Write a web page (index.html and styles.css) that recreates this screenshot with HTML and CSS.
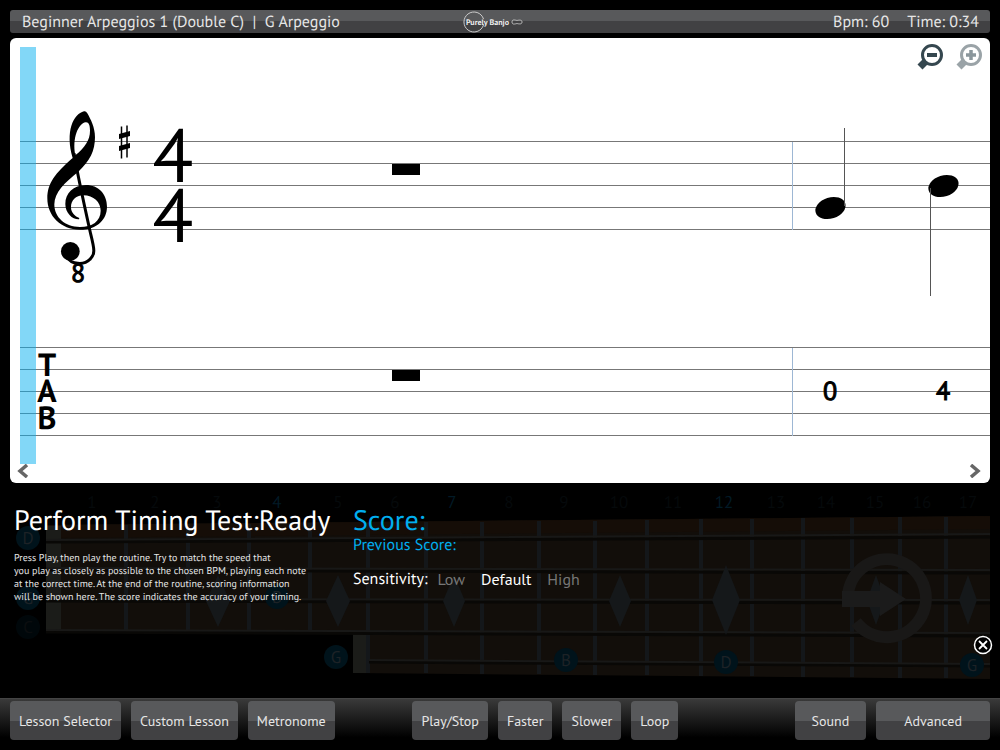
FILE: index.html
```html
<!DOCTYPE html>
<html lang="en">
<head>
    <meta charset="UTF-8">
    <meta name="viewport" content="width=device-width, initial-scale=1.0">
    <title>Purely Banjo</title>
    <link rel="stylesheet" href="styles.css">
</head>
<body>
    <header class="topbar">
        <h1 class="lesson-title">Beginner Arpeggios 1 (Double C) &nbsp;|&nbsp; G Arpeggio</h1>
        <svg class="logo" width="60" height="23" viewBox="0 0 60 23" role="img" aria-label="Purely Banjo">
            <path d="M20.500 8A10 10 0 1 0 20.500 14" fill="none" stroke="#ccc"/>
            <text x="3" y="14" class="logo-text">Purely Banjo</text>
            <path d="M49 11c0-3 3-2 5-1.500C56 9 59 8.500 59 11s-3 2-5 1.500C52 13 49 14 49 11z" fill="none" stroke="#bbb"/>
        </svg>
        <div class="status">
            <span>Bpm: 60</span>
            <span>Time: 0:34</span>
        </div>
    </header>

    <main class="sheet">
        <svg class="score" viewBox="0 0 980 445">
            <!-- staff -->
            <g class="line">
                <path d="M10 103.500H980M10 125.500H980M10 147.500H980M10 169.500H980M10 191.500H980"/>
                <path d="M10 309.500H980M10 331.500H980M10 353.500H980M10 375.500H980M10 397.500H980"/>
            </g>
            <path class="bar" d="M782.500 104V192M782.500 310V398"/>
            <rect class="cursor" x="10" y="9" width="16" height="417"/>

            <!-- treble clef -->
            <g transform="translate(0 52) scale(0.3333)">
                <path fill-rule="evenodd" d="M222 64C190 72 165 125 188 204C135 250 112 280 112 325C112 378 152 419 210 419C262 419 291 388 291 350C291 312 265 285 228 285C190 285 166 310 166 342C166 370 188 389 207 388L208 384C195 380 183 368 183 352C183 332 197 316 220 316C251 316 272 337 272 362C272 394 246 411 210 411C165 411 133 382 133 343C133 307 165 277 205 245C240 213 255 182 255 142C255 112 242 88 232 70C229 65 226 63 222 64ZM227 97C205 100 186 145 196 196C225 172 240 150 240 122C240 105 236 96 227 97Z"/>
                <path d="M192 190C200 240 226 360 242 432C254 480 256 492 240 508C222 527 184 524 170 500" fill="none" stroke="#000" stroke-width="9"/>
                <circle cx="181" cy="484" r="28"/>
            </g>
            <text class="octave" x="68" y="244">8</text>

            <!-- key and time signature -->
            <path d="M111.500 88.500v32M117 87.500v32" stroke="#000" stroke-width="1.500"/>
            <path d="M109 96l11-3v5l-11 3zM109 108l11-3v5l-11 3z"/>
            <text class="time" x="163" y="144">4</text>
            <text class="time" x="163" y="204">4</text>

            <!-- rests -->
            <rect x="382" y="126" width="28" height="11"/>
            <rect x="382" y="332" width="28" height="11"/>

            <!-- notes -->
            <ellipse cx="820.500" cy="170" rx="15.500" ry="10.500" transform="rotate(-18 820.500 170)"/>
            <ellipse cx="933.500" cy="148" rx="15.500" ry="10.500" transform="rotate(-18 933.500 148)"/>
            <path class="stem" d="M834.500 90V168M920.500 150V258"/>

            <g class="tab">
                <text x="37" y="338">T</text>
                <text x="37" y="364">A</text>
                <text x="37" y="391">B</text>
            </g>
            <g class="fret">
                <text x="820" y="362">0</text>
                <text x="933" y="362">4</text>
            </g>
        </svg>

        <div class="zoom">
            <button type="button" aria-label="Zoom out">
                <svg width="28" height="28" viewBox="0 0 28 28">
                    <path d="M9 18l-6 6" stroke="#35474f" stroke-width="7"/>
                    <circle cx="15" cy="12" r="9.500" fill="#fff" stroke="#35474f" stroke-width="3"/>
                    <path d="M10 12h10" stroke="#35474f" stroke-width="4"/>
                </svg>
            </button>
            <button type="button" aria-label="Zoom in" disabled>
                <svg width="28" height="28" viewBox="0 0 28 28">
                    <path d="M9 18l-6 6" stroke="#9aa3a7" stroke-width="7"/>
                    <circle cx="15" cy="12" r="9.500" fill="#fff" stroke="#9aa3a7" stroke-width="3"/>
                    <path d="M10 12h10M15 7v10" stroke="#8b979c" stroke-width="3.500"/>
                </svg>
            </button>
        </div>

        <button class="nav prev" type="button" aria-label="Previous">
            <svg width="12" height="14" viewBox="0 0 12 14"><path d="M10 1L3 7l7 6" fill="none" stroke="#666" stroke-width="3.500"/></svg>
        </button>
        <button class="nav next" type="button" aria-label="Next">
            <svg width="12" height="14" viewBox="0 0 12 14"><path d="M2 1l7 6-7 6" fill="none" stroke="#666" stroke-width="3.500"/></svg>
        </button>
    </main>

    <section class="panel">
        <svg class="neck" viewBox="0 0 1000 215" preserveAspectRatio="xMinYMin slice" aria-hidden="true">
            <path d="M46 42L990 33V196L353 190V147H46z" fill="#120e0a"/>
            <path d="M46 42L990 33V46L46 55z" fill="#150d07"/>
            <path d="M46 43h15v104H46zM353 149h16v41h-16z" fill="#1b1c19"/>
            <path class="wire" d="M126 42V147M188 41V147M249 41V147M310 40V147M368 40V190M426 39V190M482 39V191M539 38V191M595 38V192M647 37V192M701 36V193M752 36V193M803 35V194M852 35V194M900 34V195M946 34V195"/>
            <path class="shadow" d="M46 59L990 54M46 87L990 90M46 118L990 120M46 149L990 153M369 179L990 183"/>
            <path class="string" d="M46 57L990 51M46 85L990 87M46 116L990 117M46 147L990 150M369 177L990 181"/>
            <path fill="#15181a" d="M218 92l12 26-12 26-12-26zM338 92l12 26-12 26-12-26zM454 92l11 26-11 26-11-26zM620 92l11 26-11 26-11-26zM726 82l14 35-14 35-14-35zM876 92l9 25-9 25-9-25zM968 92l9 25-9 25-9-25z"/>
            <g class="fret-no">
                <text x="92" y="25">1</text>
                <text x="155" y="25">2</text>
                <text x="217" y="25">3</text>
                <text x="277" y="25" class="on">4</text>
                <text x="338" y="25">5</text>
                <text x="395" y="25">6</text>
                <text x="452" y="25" class="on">7</text>
                <text x="509" y="25">8</text>
                <text x="564" y="25">9</text>
                <text x="619" y="25">10</text>
                <text x="673" y="25">11</text>
                <text x="724" y="25" class="on">12</text>
                <text x="776" y="25">13</text>
                <text x="826" y="25">14</text>
                <text x="875" y="25">15</text>
                <text x="922" y="25">16</text>
                <text x="968" y="25">17</text>
            </g>
            <g class="dot">
                <circle cx="28" cy="55" r="12"/><text x="28" y="61">D</text>
                <circle cx="28" cy="115" r="12"/><text x="28" y="121">G</text>
                <circle cx="277" cy="114" r="12"/><text x="277" y="120">B</text>
                <circle cx="336" cy="174" r="12"/><text x="336" y="180">G</text>
                <circle cx="566" cy="177" r="12"/><text x="566" y="183">B</text>
                <circle cx="726" cy="179" r="12"/><text x="726" y="185">D</text>
                <circle cx="972" cy="182" r="12"/><text x="972" y="188">G</text>
                <g opacity="0.400"><circle cx="28" cy="144" r="12"/><text x="28" y="150">C</text></g>
            </g>
            <path d="M848 118A39 39 0 1 1 856 139" fill="none" stroke="#191817" stroke-width="12"/>
            <path d="M842 108h38v-9l26 17-26 17v-9h-38z" fill="#1b1b1b"/>
        </svg>

        <div class="test">
            <h2>Perform Timing Test:Ready</h2>
            <p>Press Play, then play the routine. Try to match the speed that<br>
                you play as closely as possible to the chosen BPM, playing each note<br>
                at the correct time. At the end of the routine, scoring information<br>
                will be shown here. The score indicates the accuracy of your timing.</p>
        </div>
        <div class="result">
            <h2>Score:</h2>
            <h3>Previous Score:</h3>
            <div class="sensitivity">
                <span>Sensitivity:</span>
                <button type="button">Low</button>
                <button type="button" class="active">Default</button>
                <button type="button">High</button>
            </div>
        </div>
        <button class="close" type="button" aria-label="Close">
            <svg width="20" height="20" viewBox="0 0 20 20">
                <circle cx="10" cy="10" r="8.500" fill="#000" stroke="#fff" stroke-width="1.500"/>
                <path d="M6 6l8 8M14 6l-8 8" stroke="#fff" stroke-width="1.800"/>
            </svg>
        </button>
    </section>

    <footer class="toolbar">
        <button type="button">Lesson Selector</button>
        <button type="button">Custom Lesson</button>
        <button type="button">Metronome</button>
        <span class="space-left"></span>
        <button type="button">Play/Stop</button>
        <button type="button">Faster</button>
        <button type="button">Slower</button>
        <button type="button">Loop</button>
        <span class="space-right"></span>
        <button type="button" class="wide">Sound</button>
        <button type="button" class="wider">Advanced</button>
    </footer>
</body>
</html>
```
FILE: styles.css
```css
* {
    box-sizing: border-box;
}

body {
    margin: 0;
    min-height: 100vh;
    display: flex;
    flex-direction: column;
    background: #000;
    color: #e6e6e6;
    font-family: "PT Sans", "Noto Sans CJK SC", sans-serif;
    text-rendering: geometricPrecision;
}

h1, h2, h3, p {
    margin: 0;
    font-weight: normal;
}

button {
    margin: 0;
    padding: 0;
    border: none;
    background: none;
    color: inherit;
    font: inherit;
    cursor: pointer;
}

svg {
    display: block;
}

/* top bar */
.topbar {
    display: grid;
    grid-template-columns: 1fr auto 1fr;
    align-items: center;
    height: 23px;
    margin: 10px 10px 5px;
    padding: 0 11px 0 12px;
    border-radius: 3px;
    background: linear-gradient(#58595b 50%, #414143 50%);
    font-size: 16px;
    line-height: 24px;
}

.lesson-title {
    font-size: 16px;
    white-space: nowrap;
}

.logo {
    margin-right: 16px;
}

.logo-text {
    font-size: 8px;
    font-weight: bold;
    fill: #eee;
}

.status {
    display: flex;
    justify-content: flex-end;
    gap: 18px;
}

/* music sheet */
.sheet {
    position: relative;
    margin: 0 10px;
    border-radius: 6px;
    background: #fff;
}

.score {
    width: 100%;
    height: auto;
}

.score text {
    text-anchor: middle;
}

.line {
    stroke: #777;
}

.bar {
    stroke: #9db7d4;
}

.stem {
    stroke: #555;
}

.cursor {
    fill: #05b0f0;
    fill-opacity: 0.5;
}

.octave,
.fret {
    font-size: 26px;
    stroke: #000;
}

.time {
    font-size: 75px;
}

.tab {
    font-size: 32px;
    font-weight: bold;
}

.zoom {
    position: absolute;
    top: 5px;
    right: 6px;
    display: flex;
    gap: 11px;
}

.nav {
    position: absolute;
    bottom: 5px;
}

.prev {
    left: 7px;
}

.next {
    right: 9px;
}

/* test panel */
.panel {
    position: relative;
    flex: 1;
    display: flex;
    gap: 20px;
    min-height: 215px;
    padding: 20px 14px 0;
}

.neck {
    position: absolute;
    inset: 0;
    width: 100%;
    height: 100%;
}

.wire {
    stroke: #14171a;
    stroke-width: 4;
}

.shadow {
    stroke: #090806;
    stroke-width: 3;
}

.string {
    stroke: #181817;
    stroke-width: 2;
}

.neck text {
    text-anchor: middle;
    font-size: 17px;
}

.fret-no {
    fill: #05090b;
}

.fret-no .on {
    fill: #021a26;
}

.dot circle {
    fill: #00131b;
}

.dot text {
    fill: #1d2226;
}

.test,
.result {
    position: relative;
}

.test {
    width: 319px;
    white-space: nowrap;
}

.panel h2 {
    font-size: 28px;
    line-height: 34px;
    color: #fff;
}

.test p {
    margin-top: 14px;
    font-size: 10px;
    line-height: 13px;
}

.panel .result h2,
.result h3 {
    color: #00aeef;
}

.result h3 {
    font-size: 16px;
    line-height: 16px;
}

.sensitivity {
    display: flex;
    gap: 16px;
    margin-top: 16px;
    font-size: 16px;
    line-height: 20px;
    color: #fff;
}

.sensitivity span {
    margin-right: -6px;
}

.sensitivity button {
    color: #777;
}

.sensitivity .active {
    color: #fff;
}

.close {
    position: absolute;
    right: 7px;
    bottom: 43px;
}

/* bottom toolbar */
.toolbar {
    display: flex;
    gap: 10px;
    height: 52px;
    padding: 2px 10px 10px;
    border-top: 1px solid #444;
    background: linear-gradient(#3a3a3a, #000 75%);
}

.toolbar button {
    padding: 0 9px;
    border-radius: 4px;
    background: linear-gradient(#58595b 50%, #414143 50%);
    font-size: 14px;
    line-height: 20px;
    white-space: nowrap;
}

.toolbar .wide {
    padding: 0 17px;
}

.toolbar .wider {
    padding: 0 28px;
}

.space-left {
    flex: 3;
}

.space-right {
    flex: 5;
}
```
